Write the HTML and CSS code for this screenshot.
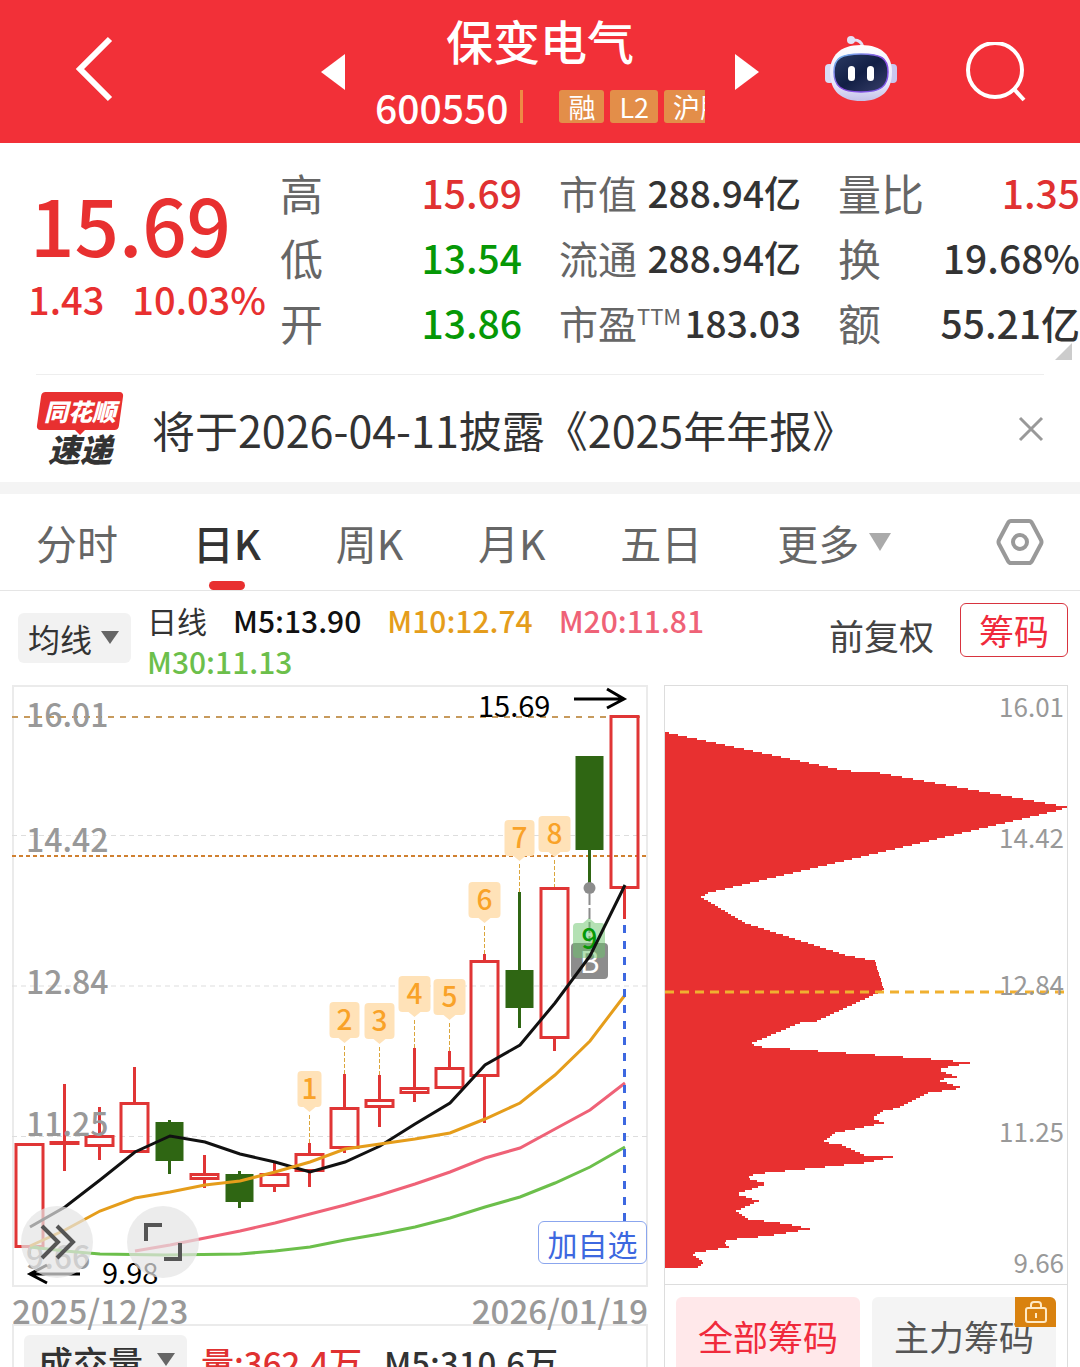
FILE: index.html
```html
<!DOCTYPE html>
<html lang="zh-CN">
<head>
    <meta charset="UTF-8">
    <meta name="viewport" content="width=device-width, initial-scale=1">
    <title>保变电气 600550</title>
    <link rel="stylesheet" href="styles.css">
</head>
<body>
    <header class="topbar">
        <button class="icon-btn back" aria-label="返回">
            <svg width="40" height="68" viewBox="0 0 40 68"><path d="M35 4 5 34l30 30" fill="none" stroke="#fff" stroke-width="6"/></svg>
        </button>
        <div class="stock-switch">
            <button class="icon-btn" aria-label="上一只">
                <svg width="24" height="36" viewBox="0 0 24 36"><path d="M24 0v36L0 18z" fill="#fff"/></svg>
            </button>
            <div class="stock-title">
                <h1>保变电气</h1>
                <div class="stock-code">
                    <span class="code">600550</span>
                    <span class="bar"></span>
                    <div class="tags">
                        <span>融</span><span>L2</span><span>沪股通</span>
                    </div>
                </div>
            </div>
            <button class="icon-btn" aria-label="下一只">
                <svg width="24" height="36" viewBox="0 0 24 36"><path d="M0 0v36l24-18z" fill="#fff"/></svg>
            </button>
        </div>
        <div class="top-actions">
            <button class="icon-btn" aria-label="智能助手">
                <svg width="72" height="72" viewBox="0 0 72 72">
                    <defs>
                        <linearGradient id="shell" x1="0" y1="0" x2="0" y2="1">
                            <stop offset="0" stop-color="#fff"/>
                            <stop offset=".7" stop-color="#e6e6fa"/>
                            <stop offset="1" stop-color="#c3c0e8"/>
                        </linearGradient>
                        <linearGradient id="rim" x1="0" y1="0" x2="1" y2="1">
                            <stop offset="0" stop-color="#6fc6ee"/>
                            <stop offset=".5" stop-color="#8a4be0"/>
                            <stop offset="1" stop-color="#7a5be8"/>
                        </linearGradient>
                        <linearGradient id="visor" x1="0" y1="0" x2="1" y2="1">
                            <stop offset="0" stop-color="#2a3a63"/>
                            <stop offset=".5" stop-color="#121f45"/>
                            <stop offset="1" stop-color="#39406a"/>
                        </linearGradient>
                    </defs>
                    <path d="M27 4q9-1 11 7" fill="none" stroke="#e4e2f6" stroke-width="3"/>
                    <circle cx="26" cy="4" r="4" fill="#e4e2f6"/>
                    <rect x="0" y="28" width="9" height="19" rx="4" fill="#d9dcf6"/>
                    <rect x="63" y="28" width="9" height="19" rx="4" fill="#c9c7ef"/>
                    <path d="M36 9c21 0 31 11 31 27 0 19-11 29-31 29S5 55 5 36C5 20 15 9 36 9z" fill="url(#shell)"/>
                    <path d="M36 18c20 0 27 4 27 18s-7 20-27 20S9 50 9 36s7-18 27-18z" fill="url(#visor)" stroke="url(#rim)" stroke-width="1.5"/>
                    <rect x="23" y="30" width="7" height="15" rx="3.5" fill="#fff"/>
                    <rect x="42" y="30" width="7" height="15" rx="3.5" fill="#fff"/>
                </svg>
            </button>
            <button class="icon-btn" aria-label="搜索">
                <svg width="60" height="60" viewBox="0 0 60 60"><g fill="none" stroke="#fff" stroke-width="4"><circle cx="29" cy="28" r="27"/><path d="m47 46 11 12"/></g></svg>
            </button>
        </div>
    </header>

    <section class="quote">
        <div class="price">
            <div class="last">15.69</div>
            <div class="change"><span>1.43</span><span>10.03%</span></div>
        </div>
        <dl>
            <div><dt>高</dt><dd class="up">15.69</dd></div>
            <div><dt>低</dt><dd class="down">13.54</dd></div>
            <div><dt>开</dt><dd class="down">13.86</dd></div>
        </dl>
        <dl class="small">
            <div><dt>市值</dt><dd>288.94亿</dd></div>
            <div><dt>流通</dt><dd>288.94亿</dd></div>
            <div><dt>市盈<sup>TTM</sup></dt><dd>183.03</dd></div>
        </dl>
        <dl>
            <div><dt>量比</dt><dd class="up">1.35</dd></div>
            <div><dt>换</dt><dd>19.68%</dd></div>
            <div><dt>额</dt><dd>55.21亿</dd></div>
        </dl>
        <span class="corner"></span>
    </section>

    <section class="news">
        <div class="news-logo">
            <span class="brand">同花顺</span>
            <span class="express">速递</span>
        </div>
        <a href="#news">将于2026-04-11披露《2025年年报》</a>
        <button class="icon-btn" aria-label="关闭">
            <svg width="26" height="26" viewBox="0 0 26 26"><path d="m2 2 22 22M24 2 2 24" stroke="#999" stroke-width="3" fill="none"/></svg>
        </button>
    </section>

    <nav class="tabs">
        <button>分时</button>
        <button class="active">日K</button>
        <button>周K</button>
        <button>月K</button>
        <button>五日</button>
        <button class="more">更多<svg width="22" height="18" viewBox="0 0 22 18"><path d="M0 0h22L11 18z" fill="#aaa"/></svg></button>
        <button aria-label="设置">
            <svg width="48" height="46" viewBox="0 0 48 46"><g fill="none" stroke="#999" stroke-width="4"><path stroke-linejoin="round" d="M15 2h18q2 0 3 2l9 17q1 2 0 4l-9 17q-1 2-3 2H15q-2 0-3-2L3 25q-1-2 0-4l9-17q1-2 3-2z"/><circle cx="24" cy="23" r="7"/></g></svg>
        </button>
    </nav>

    <div class="indicators">
        <div class="picker">
            <select aria-label="主图指标"><option>均线</option></select>
        </div>
        <div class="legend">
            <span>日线</span>
            <b class="m5">M5:13.90</b>
            <b class="m10">M10:12.74</b>
            <b class="m20">M20:11.81</b>
            <b class="m30">M30:11.13</b>
        </div>
        <button class="adjust">前复权</button>
        <button class="chips-btn">筹码</button>
    </div>

    <main class="charts">
        <div class="left">
            <div class="kline">
                <svg id="kline" viewBox="12 685 636 602">
                    <g class="grid">
                        <path d="M12 835.5H648M12 986H648M12 1136.5H648"/>
                        <path class="limit" d="M12 717H640"/>
                        <path class="cost" d="M12 856H648"/>
                    </g>
                    <g id="candles"></g>
                    <g id="counts"></g>
                    <g class="axis">
                        <text x="26" y="727">16.01</text>
                        <text x="26" y="852">14.42</text>
                        <text x="26" y="994">12.84</text>
                        <text x="26" y="1136">11.25</text>
                        <text x="26" y="1269">9.66</text>
                    </g>
                    <g class="trade">
                        <circle cx="589.5" cy="888" r="6"/>
                        <path d="M589.5 894v48"/>
                        <rect x="571" y="943" width="37" height="36" rx="4"/>
                        <text x="589.5" y="973">B</text>
                    </g>
                    <g class="nine">
                        <path d="M577 923h6l6-5 6 5h6q4 0 4 4v27q0 4-4 4h-24q-4 0-4-4v-27q0-4 4-4z"/>
                        <text x="589.5" y="949">9</text>
                    </g>
                    <g class="lines">
                        <polyline class="m30" points="30,1247 65,1251 100,1254 165,1255 240,1254 275,1251 310,1247 345,1240 380,1234 415,1227 450,1218 485,1207 520,1197 555,1183 590,1167 625,1147"/>
                        <polyline class="m20" points="135,1251 170,1245 205,1238 240,1231 275,1223 310,1214 345,1205 380,1195 415,1184 450,1172 485,1158 520,1148 555,1129 590,1110 625,1083"/>
                        <polyline class="m5" points="30,1227 65,1207 100,1180 135,1152 170,1136 205,1142 240,1154 275,1162 310,1172 345,1162 380,1146 415,1124 450,1103 485,1065 520,1045 555,1003 590,956 625,885"/>
                        <polyline class="m10" points="30,1246 65,1230 100,1211 135,1198 170,1192 205,1185 240,1181 275,1172 310,1162 345,1149 380,1144 415,1139 450,1133 485,1119 520,1103 555,1075 590,1041 625,995"/>
                    </g>
                    <path class="today" d="M624.5 925V1221"/>
                    <g class="extreme">
                        <text x="478" y="717">15.69</text>
                        <path d="M574 699h50M607 689l17 10-17 9"/>
                        <text x="102" y="1284">9.98</text>
                        <path d="M80 1274H30M47 1265l-17 9 17 9"/>
                    </g>
                </svg>
                <div class="chart-tools">
                    <button aria-label="展开">
                        <svg width="36" height="36" viewBox="0 0 36 36"><path d="m3 2 16 16L3 34M18 2l16 16-16 16" fill="none" stroke="#555" stroke-width="4"/></svg>
                    </button>
                    <button aria-label="全屏">
                        <svg width="38" height="38" viewBox="0 0 38 38"><path d="M2 18V2h16M36 20v16H20" fill="none" stroke="#555" stroke-width="4"/></svg>
                    </button>
                </div>
                <button class="add-fav">加自选</button>
            </div>
            <div class="dates"><span>2025/12/23</span><span>2026/01/19</span></div>
            <div class="volume">
                <div class="picker">
                    <select aria-label="副图指标"><option>成交量</option></select>
                </div>
                <b class="up">量:362.4万</b>
                <b>M5:310.6万</b>
            </div>
        </div>

        <div class="right">
            <svg id="chips" viewBox="665 686 402 598">
                <g id="chipRows"></g>
                <path class="avg" d="M665 992H1064"/>
                <g class="chip-axis">
                    <text x="1064" y="717">16.01</text>
                    <text x="1064" y="848">14.42</text>
                    <text x="1064" y="995">12.84</text>
                    <text x="1064" y="1142">11.25</text>
                    <text x="1064" y="1273">9.66</text>
                </g>
            </svg>
            <div class="chip-tabs">
                <button class="active">全部筹码</button>
                <button>主力筹码
                    <span class="lock"><svg width="24" height="24" viewBox="0 0 24 24"><g fill="none" stroke="#ffe9c4" stroke-width="2"><rect x="2" y="8" width="20" height="14" rx="2"/><path d="M7 8V5q0-3 3-3h4q3 0 3 3v3M12 13v5"/></g></svg></span>
                </button>
            </div>
        </div>
    </main>

    <script src="chart.js"></script>
</body>
</html>
```
FILE: styles.css
```css
* {
    box-sizing: border-box;
}
body {
    margin: 0;
    height: 100vh;
    overflow: hidden;
    background: #fff;
    color: #333;
    font-family: "Noto Sans CJK SC", sans-serif;
}
button, select {
    border: 0;
    padding: 0;
    background: none;
    color: inherit;
    font-family: inherit;
    cursor: pointer;
}
svg {
    display: block;
}
.up { color: #e03131; }
.down { color: #069806; }

/* header */
.topbar {
    display: grid;
    grid-template-columns: 1fr 438px 1fr;
    align-items: center;
    height: 143px;
    background: #f23038;
    color: #fff;
}
.back {
    justify-self: start;
    margin: 0 0 6px 75px;
}
.stock-switch {
    display: flex;
    align-items: center;
    justify-content: space-between;
}
.stock-title {
    width: 330px;
}
.stock-title h1 {
    margin: 0;
    font-size: 47px;
    line-height: 62px;
    font-weight: 500;
    text-align: center;
}
.stock-code {
    display: flex;
    align-items: center;
    height: 64px;
    padding-top: 8px;
}
.code {
    font-size: 39px;
    font-weight: 500;
}
.bar {
    width: 3px;
    height: 33px;
    margin: 0 36px 0 12px;
    background: #ee8a45;
}
.tags {
    display: flex;
    flex: 1;
    gap: 6px;
    overflow: hidden;
}
.tags span {
    flex: none;
    padding: 0 9px;
    border-radius: 3px;
    background: #e38e49;
    font-size: 27px;
    line-height: 33px;
}
.top-actions {
    display: flex;
    align-items: center;
    justify-content: flex-end;
    gap: 69px;
    padding-right: 54px;
}

/* quote */
.quote {
    position: relative;
    display: grid;
    grid-template-columns: minmax(0, 252fr) minmax(0, 279fr) minmax(0, 279fr) minmax(0, 242fr);
    margin-left: 28px;
    padding: 16px 0 20px;
}
.price {
    font-weight: 500;
    color: #e83030;
    white-space: nowrap;
}
.last {
    padding: 16px 0 0 2px;
    font-size: 78px;
    line-height: 96px;
}
.change {
    display: flex;
    gap: 28px;
    font-size: 38px;
    line-height: 56px;
}
.quote dl {
    margin: 0;
    padding-right: 37px;
}
.quote dl:nth-of-type(3) {
    padding-right: 0;
}
.quote dl div {
    display: flex;
    justify-content: space-between;
    align-items: center;
    height: 65px;
    white-space: nowrap;
}
.quote dt {
    color: #666;
    font-size: 43px;
}
.quote dd {
    margin: 0;
    font-size: 39px;
    font-weight: 500;
}
.quote .small dt { font-size: 39px; }
.quote .small dd { font-size: 37px; }
.quote .small sup {
    font-size: 22px;
    line-height: 22px;
}
.corner {
    position: absolute;
    right: 8px;
    bottom: 14px;
    border-left: 17px solid transparent;
    border-bottom: 17px solid #ccc;
}

/* news */
.news {
    display: flex;
    align-items: center;
    height: 108px;
    margin: 0 36px;
    border-top: 1px solid #eee;
}
.news-logo {
    display: flex;
    flex-direction: column;
    align-items: center;
    width: 88px;
    margin-right: 28px;
    font-style: italic;
    font-weight: 900;
}
.brand {
    position: relative;
    width: 88px;
    color: #fff;
    font-size: 24px;
    line-height: 38px;
    text-align: center;
    z-index: 0;
}
.brand::before {
    content: "";
    position: absolute;
    inset: 0 3px;
    z-index: -1;
    border-radius: 4px;
    background: #e83030;
    transform: skewX(-8deg);
}
.brand::after {
    content: "";
    position: absolute;
    left: 38px;
    top: 37px;
    border: 6px solid transparent;
    border-top-color: #e83030;
}
.express {
    font-size: 32px;
    line-height: 36px;
}
.news a {
    flex: 1;
    color: #333;
    font-size: 43px;
    text-decoration: none;
    white-space: nowrap;
}

/* tabs */
.tabs {
    display: flex;
    align-items: center;
    justify-content: space-between;
    height: 109px;
    padding: 0 36px;
    border-top: 12px solid #f4f4f4;
    border-bottom: 1px solid #e5e5e5;
}
.tabs button {
    position: relative;
    height: 96px;
    color: #666;
    font-size: 41px;
}
.tabs .active {
    color: #333;
    font-weight: 500;
}
.tabs .active::after {
    content: "";
    position: absolute;
    left: calc(50% - 18px);
    bottom: 0;
    width: 36px;
    height: 9px;
    border-radius: 5px;
    background: #e83030;
}
.tabs .more {
    display: flex;
    align-items: center;
    gap: 10px;
    margin-right: 30px;
}

/* indicator row */
.indicators {
    display: flex;
    align-items: flex-start;
    height: 94px;
    padding: 12px 12px 0 18px;
}
.picker {
    position: relative;
    flex: none;
}
.picker select {
    appearance: none;
    height: 50px;
    padding: 0 38px 0 10px;
    border-radius: 6px;
    background: #f2f2f2;
    font-size: 32px;
}
.picker::after {
    content: "";
    position: absolute;
    right: 12px;
    top: 18px;
    border: 9px solid transparent;
    border-top: 13px solid #666;
    border-bottom: 0;
    pointer-events: none;
}
.indicators .picker {
    margin-top: 10px;
}
.legend {
    display: flex;
    flex: 1;
    flex-wrap: wrap;
    column-gap: 26px;
    margin: -3px 60px 0 16px;
    font-size: 30px;
    line-height: 41px;
}
.legend b { font-weight: 500; }
.legend .m5 { color: #111; }
.legend .m10 { color: #e59d1b; }
.legend .m20 { color: #ef6277; }
.legend .m30 { color: #6cbf4b; }
.adjust {
    margin: 5px 26px 0 0;
    font-size: 35px;
    line-height: 54px;
    color: #444;
}
.chips-btn {
    width: 108px;
    height: 54px;
    border: 1px solid #d8343f;
    border-radius: 6px;
    color: #f02a3c;
    font-size: 35px;
    line-height: 50px;
}

/* charts */
.charts {
    display: grid;
    grid-template-columns: 636fr 404fr;
    gap: 16px;
    padding: 0 12px;
}
.kline {
    position: relative;
    box-shadow: inset 0 0 0 2px #ebebeb;
}
.kline svg {
    overflow: visible;
}
#kline, #chips {
    width: 100%;
    height: auto;
}
.grid path {
    fill: none;
    stroke: #ddd;
    stroke-dasharray: 5 4;
}
.grid .limit {
    stroke: #c79a5c;
    stroke-width: 2;
    stroke-dasharray: 6 6;
}
.grid .cost {
    stroke: #d08030;
    stroke-width: 2;
    stroke-dasharray: 4 3;
}
.rise { fill: none; stroke: #e03535; stroke-width: 3; }
.fall { fill: #2f6613; stroke: #2f6613; stroke-width: 3; }
.count path { fill: #ffe2b8; }
.count .lead { fill: none; stroke: #dba63c; stroke-dasharray: 4 2; }
.count text {
    fill: #f9a228;
    font-size: 28px;
    font-weight: 500;
    text-anchor: middle;
}
.axis text {
    fill: #999;
    font-size: 32px;
    font-weight: 500;
}
.trade { fill: #8c8c8c; }
.trade path { stroke: #8c8c8c; stroke-width: 2; stroke-dasharray: 11 3; }
.trade text {
    fill: #fff;
    font-size: 30px;
    text-anchor: middle;
}
.nine path { fill: #69c469; fill-opacity: .5; }
.nine text {
    fill: #069806;
    font-size: 28px;
    font-weight: 500;
    text-anchor: middle;
}
.lines polyline { fill: none; stroke-width: 3; }
.lines .m5 { stroke: #111; }
.lines .m10 { stroke: #e59d1b; }
.lines .m20 { stroke: #ef6277; }
.lines .m30 { stroke: #6cbf4b; }
.today { stroke: #3d68e0; stroke-width: 3; stroke-dasharray: 8 8; }
.extreme text { fill: #000; font-size: 29px; }
.extreme path { fill: none; stroke: #000; stroke-width: 3; }
.chart-tools {
    position: absolute;
    left: 9px;
    bottom: 9px;
    display: flex;
    gap: 34px;
}
.chart-tools button {
    display: grid;
    place-items: center;
    width: 72px;
    height: 72px;
    border-radius: 50%;
    background: rgba(228, 228, 228, .7);
}
.add-fav {
    position: absolute;
    right: 1px;
    bottom: 23px;
    width: 109px;
    height: 43px;
    border: 1px solid #8ba6ee;
    border-radius: 6px;
    background: #fff;
    color: #3d68e0;
    font-size: 30px;
    line-height: 40px;
}
.dates {
    display: flex;
    justify-content: space-between;
    height: 37px;
    color: #999;
    font-size: 33px;
    line-height: 46px;
    font-weight: 500;
}
.volume {
    display: flex;
    align-items: center;
    height: 75px;
    padding-left: 10px;
    border: 2px solid #ebebeb;
    font-size: 33px;
}
.volume b { font-weight: 500; margin-right: 22px; }
.volume .picker { margin-right: 14px; }
.volume select {
    height: 54px;
    padding: 0 43px 0 14px;
    font-size: 35px;
    font-weight: 500;
}

/* chips */
.right {
    border: 1px solid #ddd;
    border-bottom: 0;
}
#chipRows { fill: #e83030; shape-rendering: crispEdges; }
.avg { stroke: #f0b030; stroke-width: 3; stroke-dasharray: 9 6; }
.chip-axis text {
    fill: #999;
    font-size: 26px;
    text-anchor: end;
}
.chip-tabs {
    display: grid;
    grid-template-columns: 1fr 1fr;
    gap: 12px;
    padding: 12px 11px;
    border-top: 1px solid #ddd;
}
.chip-tabs button {
    position: relative;
    height: 76px;
    border-radius: 6px;
    background: #f4f4f4;
    color: #555;
    font-size: 35px;
}
.chip-tabs .active {
    background: #ffe8ea;
    color: #f02a3c;
}
.lock {
    position: absolute;
    top: 0;
    right: 0;
    display: grid;
    place-items: center;
    width: 41px;
    height: 30px;
    border-radius: 0 6px 0 0;
    background: #d9820f;
}
```
FILE: chart.js
```js
// [high, top, bottom, low, falling]
const candles = [
    [1143, 1143, 1248, 1254], [1084, 1141, 1145, 1171], [1107, 1135, 1147, 1160],
    [1067, 1102, 1153, 1153], [1120, 1122, 1161, 1174, 1], [1155, 1173, 1180, 1188],
    [1171, 1174, 1202, 1208, 1], [1163, 1173, 1187, 1192], [1143, 1153, 1172, 1187],
    [1074, 1107, 1149, 1153], [1075, 1099, 1108, 1127], [1048, 1087, 1094, 1102],
    [1051, 1067, 1089, 1089], [954, 960, 1077, 1123], [892, 970, 1008, 1028, 1],
    [887, 887, 1039, 1051], [756, 756, 850, 888, 1], [715, 715, 889, 919]
];

document.getElementById('candles').innerHTML = candles.map(([high, top, bottom, low, falling], i) => {
    const x = 29.5 + i * 35;
    const half = falling ? 12.5 : 13.5;
    return `<g class="${falling ? 'fall' : 'rise'}">
        <path d="M${x} ${high}V${top}M${x} ${bottom}V${low}"/>
        <rect x="${x - half}" y="${top + 1.5}" width="${half * 2}" height="${Math.max(bottom - top - 3, 1)}"/>
    </g>`;
}).join('');

// nine-turn counts: candle index, tag top, tag width
const counts = [
    [8, 1071, 24], [9, 1002, 30], [10, 1003, 30], [11, 976, 32],
    [12, 979, 32], [13, 882, 32], [14, 820, 30], [15, 816, 32]
];

document.getElementById('counts').innerHTML = counts.map(([index, top, width], i) => {
    const x = 29.5 + index * 35;
    const w = width / 2 - 4;
    return `<g class="count">
        <path class="lead" d="M${x} ${top + 44}V${candles[index][0]}"/>
        <path d="M${x - w} ${top}h${w * 2}q4 0 4 4v28q0 4-4 4h${-(w - 6)}l-6 5-6-5h${-(w - 6)}q-4 0-4-4v-28q0-4 4-4z"/>
        <text x="${x}" y="${top + 28}">${i + 1}</text>
    </g>`;
}).join('');

// outline of the chip distribution, top to bottom
const outline = [
    [664, 732], [842, 770], [860, 772], [880, 773], [1067, 807], [1060, 810], [708, 893], [701, 897],
    [745, 923], [845, 955], [875, 961], [884, 990], [817, 1021], [800, 1023], [750, 1044], [762, 1047],
    [945, 1060], [970, 1063], [948, 1067], [938, 1070], [957, 1077], [937, 1080], [963, 1088],
    [928, 1093], [898, 1108], [883, 1111], [872, 1118], [884, 1123], [835, 1133], [823, 1142],
    [842, 1145], [864, 1155], [893, 1157], [864, 1163], [815, 1168], [755, 1174], [747, 1178],
    [767, 1184], [736, 1194], [759, 1201], [736, 1211], [748, 1219], [788, 1224], [810, 1229],
    [768, 1236], [727, 1240], [724, 1244], [729, 1247], [695, 1253], [693, 1255], [704, 1262], [697, 1268]
];
const step = 2;
let rows = '';
for (let y = 732; y < 1268; y += step) {
    const mid = y + step / 2;
    const i = outline.findIndex(p => p[1] >= mid);
    const [x0, y0] = outline[i - 1];
    const [x1, y1] = outline[i];
    const x = x0 + (x1 - x0) * (mid - y0) / (y1 - y0);
    rows += `<rect x="664" y="${y}" width="${Math.round(x - 664)}" height="${step}"/>`;
}
document.getElementById('chipRows').innerHTML = rows;
```
